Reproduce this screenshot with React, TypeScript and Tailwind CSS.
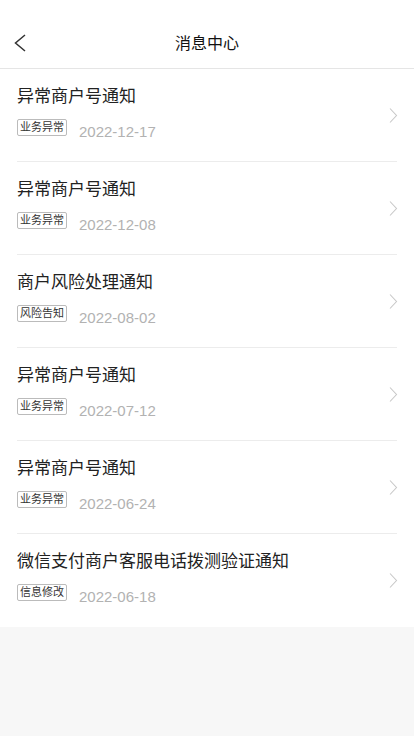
type Msg = { title: string; tag: string; date: string }

const MESSAGES: Msg[] = [
  { title: '异常商户号通知', tag: '业务异常', date: '2022-12-17' },
  { title: '异常商户号通知', tag: '业务异常', date: '2022-12-08' },
  { title: '商户风险处理通知', tag: '风险告知', date: '2022-08-02' },
  { title: '异常商户号通知', tag: '业务异常', date: '2022-07-12' },
  { title: '异常商户号通知', tag: '业务异常', date: '2022-06-24' },
  { title: '微信支付商户客服电话拨测验证通知', tag: '信息修改', date: '2022-06-18' },
]

const FONT = { fontFamily: '"Liberation Sans", "Noto Sans CJK SC", sans-serif' }

function MessageRow({ msg, last }: { msg: Msg; last: boolean }) {
  return (
    <div className="px-[17px]">
      <div className={`flex items-center h-[93px] ${last ? '' : 'border-b border-[#ececec]'}`}>
        <div className="flex-1 pb-[10px]">
          <p className="text-[17px] leading-[24px] text-[#222]">{msg.title}</p>
          <div className="flex items-end gap-[12px] mt-[10px]">
            <span className="border border-[#bbb] rounded-[2px] px-[2px] text-[11px] leading-[15px] text-[#333]">
              {msg.tag}
            </span>
            <span className="text-[15px] leading-[17px] text-[#b2b2b2] translate-y-[4px]">{msg.date}</span>
          </div>
        </div>
        <svg width="9" height="15" viewBox="0 0 9 15" fill="none" className="mr-[-1px]">
          <polyline points="1,0.5 7.5,7.5 1,14.5" stroke="#c8c8c8" strokeWidth="1.1" />
        </svg>
      </div>
    </div>
  )
}

export default function App() {
  return (
    <div className="min-h-[736px] bg-[#f7f7f7]" style={FONT}>
      <div className="bg-white pt-[20px] border-b border-[#e5e5e5] relative">
        <div className="h-[48px] flex items-center justify-center">
          <svg width="12" height="18" viewBox="0 0 12 18" fill="none" className="absolute left-[14px] top-[34px]">
            <polyline points="11,1 1.5,9 11,17" stroke="#333" strokeWidth="1.5" />
          </svg>
          <h1 className="text-[16px] text-[#111]">消息中心</h1>
        </div>
      </div>
      <div className="bg-white">
        {MESSAGES.map((m, i) => (
          <MessageRow key={i} msg={m} last={i === MESSAGES.length - 1} />
        ))}
      </div>
    </div>
  )
}
